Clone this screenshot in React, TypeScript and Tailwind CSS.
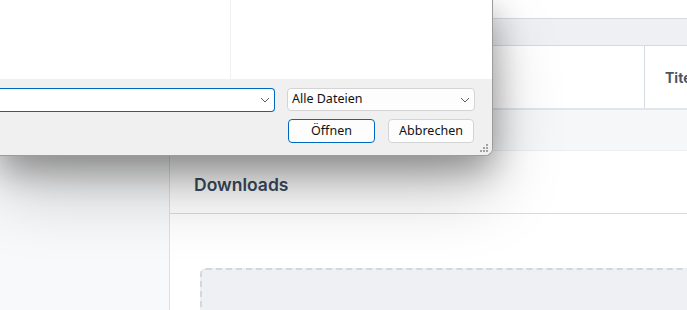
import { ChevronDown } from "lucide-react";

const Chevron = () => (
  <svg width="10" height="6" viewBox="0 0 10 6" className="shrink-0">
    <path d="M1 1l4 4 4-4" fill="none" stroke="#5f5f5f" strokeWidth="1" />
  </svg>
);

const Grip = () => (
  <svg width="9" height="9" viewBox="0 0 9 9">
    {[
      [6, 0],
      [3, 3],
      [6, 3],
      [0, 6],
      [3, 6],
      [6, 6],
    ].map(([x, y]) => (
      <rect key={`${x}-${y}`} x={x} y={y} width="2" height="2" fill="#a3a3a3" />
    ))}
  </svg>
);

const OpenDialog = () => {
  return (
    <div
      className="absolute left-0 top-0 z-10 flex h-[156px] w-[493px] flex-col overflow-hidden rounded-br-[8px] border-b border-r border-[#9c9c9c] bg-white shadow-[0_14px_34px_rgba(0,0,0,0.33),0_34px_70px_rgba(0,0,0,0.22)]"
      style={{ fontFamily: '"Noto Sans", "Open Sans", sans-serif' }}
    >
      <div className="flex h-[79px] shrink-0 bg-white">
        <div className="w-[231px] border-r border-[#f0f0f0]" />
        <div className="flex-1" />
      </div>
      <div className="relative flex flex-1 flex-col bg-[#f0f0f0] pr-[17px] pt-[9px]">
        <div className="flex items-start">
          <div className="flex h-[24px] w-[275px] items-center justify-end rounded-r-[4px] border border-l-0 border-[#0067c0] bg-white pr-[4px]">
            <Chevron />
          </div>
          <div className="ml-[12px] flex h-[23px] w-[188px] items-center justify-between rounded-[4px] border border-[#d4d4d4] bg-[#fdfdfd] pl-[4px] pr-[4px] text-[12.5px] text-[#111]">
            <span>Alle Dateien</span>
            <Chevron />
          </div>
        </div>
        <div className="mt-[7px] flex justify-end gap-[13px] text-[12.5px] text-[#111]">
          <button className="flex h-[24px] w-[87px] items-center justify-center rounded-[4px] border border-[#0067c0] bg-[#fdfdfd]">
            Öffnen
          </button>
          <button className="mr-[1px] flex h-[24px] w-[86px] items-center justify-center rounded-[4px] border border-[#d4d4d4] bg-[#fdfdfd]">
            Abbrechen
          </button>
        </div>
        <div className="absolute bottom-[2px] right-[3px]">
          <Grip />
        </div>
      </div>
    </div>
  );
};

export default function App() {
  return (
    <div
      className="relative flex h-[310px] w-[687px] overflow-hidden bg-[#f8f9fa]"
      style={{ fontFamily: 'Inter, "Noto Sans", sans-serif' }}
    >
      <OpenDialog />

      <aside className="w-[170px] shrink-0 border-r border-[#dde1e6] bg-[#f8f9fa]" />

      <main className="flex min-w-0 flex-1 flex-col bg-[#f6f7f9]">
        <div className="h-[18px] shrink-0 bg-white" />
        <div className="shrink-0 border-b-2 border-[#e1e5ea] bg-white">
          <div className="h-[28px] border-y border-[#d3dae2] bg-[#eef0f4]" />
          <div className="flex h-[62px]">
            <div className="w-[475px] shrink-0 border-r border-[#d3dae2]" />
            <div className="flex items-center whitespace-nowrap pl-[20px] text-[14px] font-bold text-[#4b5565]">
              Titel
            </div>
          </div>
        </div>

        <div className="mt-[40px] flex flex-1 flex-col border-t border-[#eceef1] bg-white">
          <div className="flex h-[63px] shrink-0 items-center border-b border-[#d5dbe1] pl-[24px] pt-[6px]">
            <h2 className="text-[17.5px] font-semibold text-[#3b4a5d]">Downloads</h2>
          </div>
          <div className="flex-1 pl-[30px] pt-[54px]">
            <div className="flex h-[80px] w-[540px] justify-center rounded-[6px] border-2 border-dashed border-[#cfd7df] bg-[#eef0f4] pt-[37px]">
              <ChevronDown className="h-[14px] w-[14px] text-[#c5ccd4]" />
            </div>
          </div>
        </div>
      </main>
    </div>
  );
}
